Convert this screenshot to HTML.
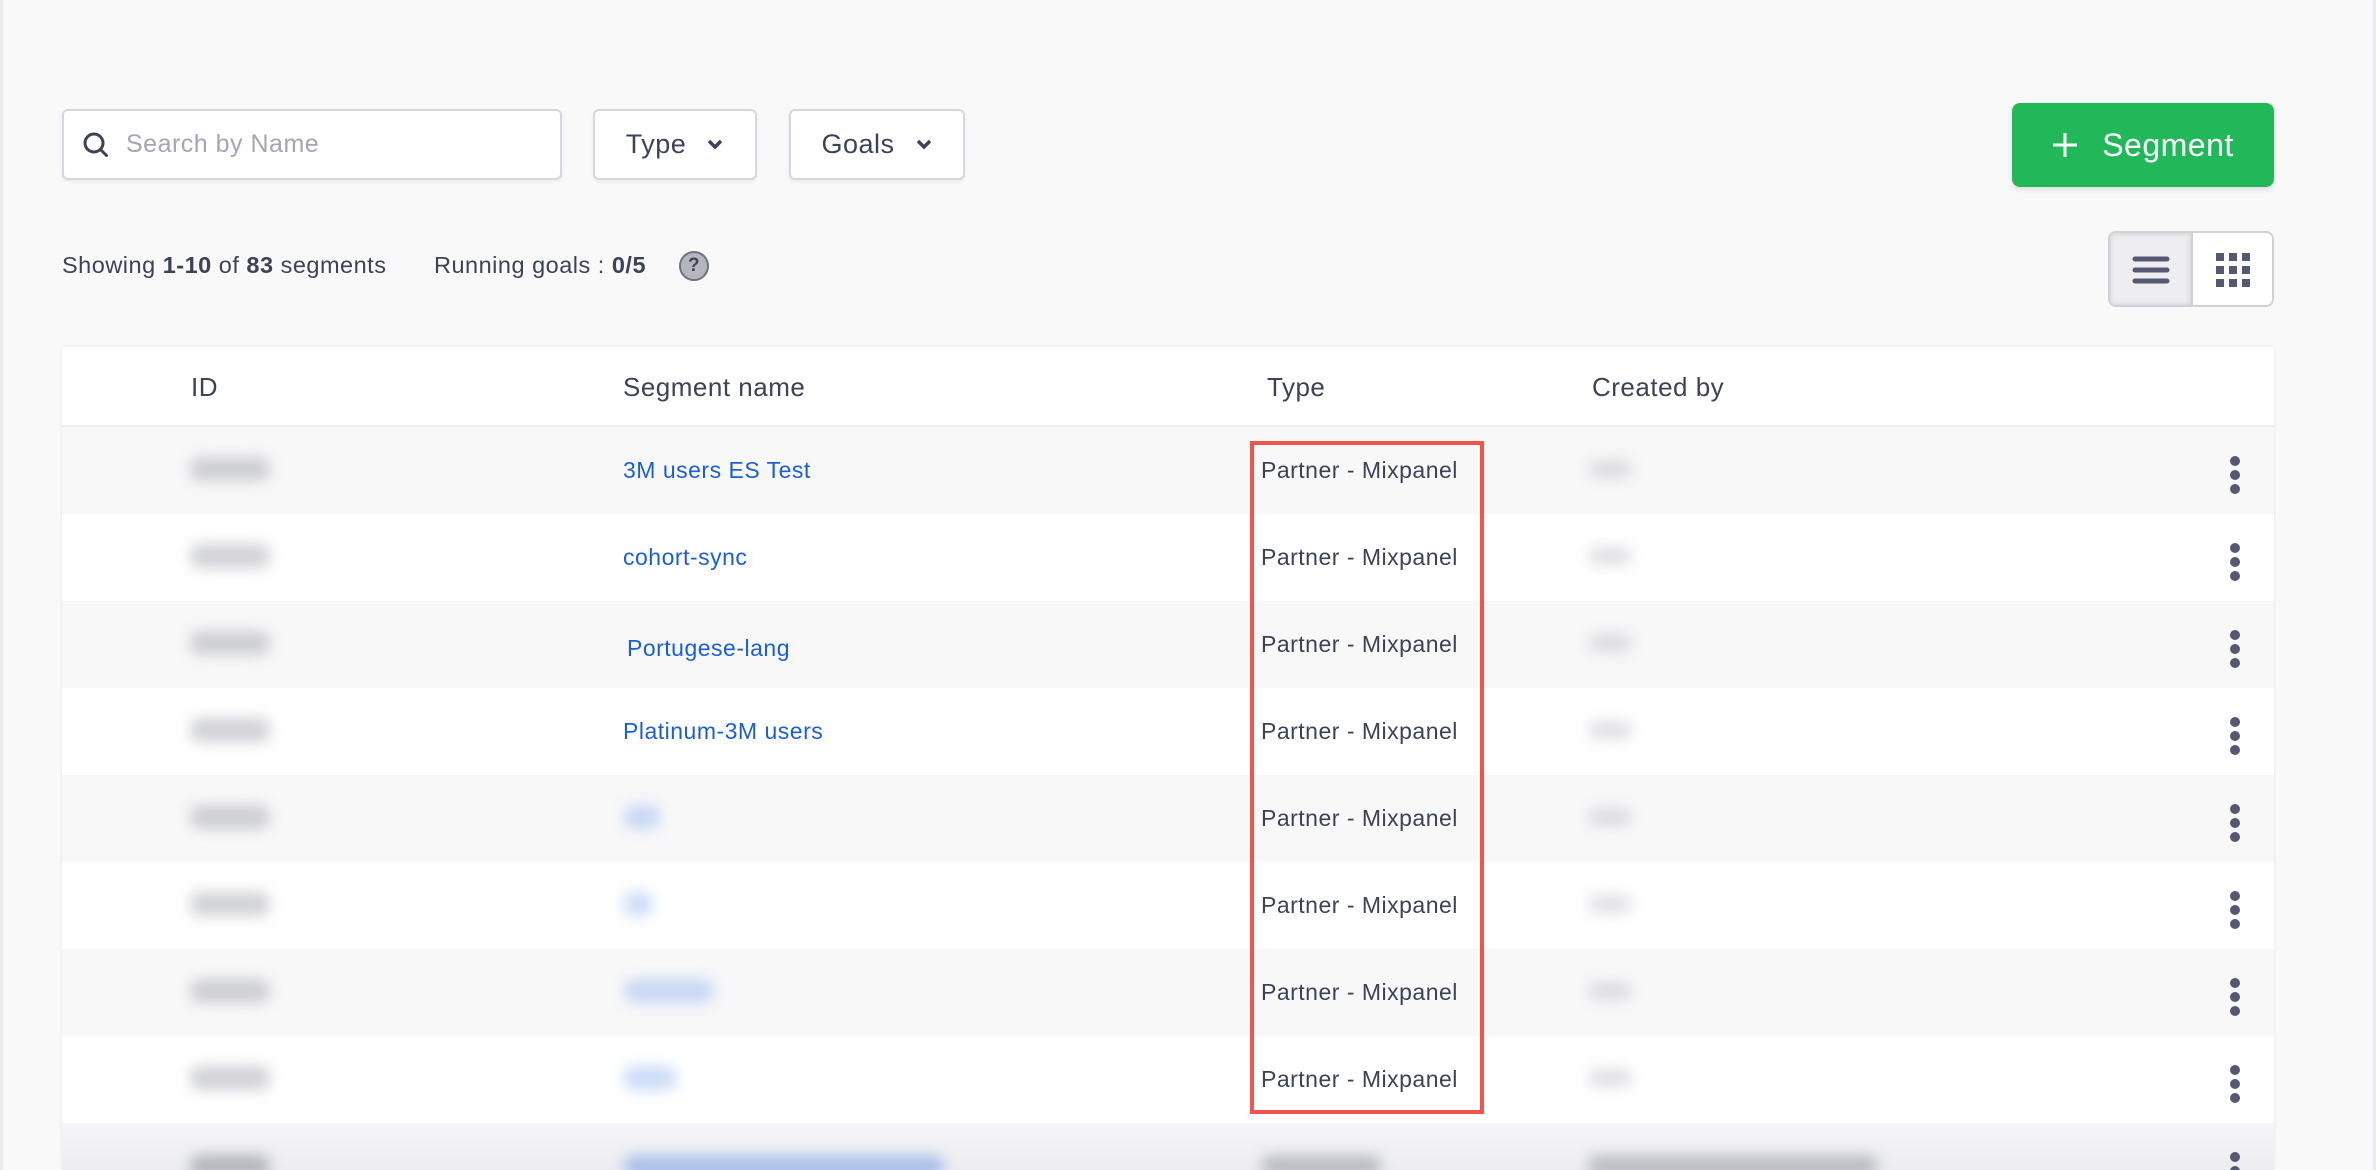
<!DOCTYPE html>
<html><head><meta charset="utf-8"><style>
*{box-sizing:border-box;margin:0;padding:0}
body{width:2376px;height:1170px;overflow:hidden;background:#f9f9fa;font-family:"Liberation Sans",sans-serif;color:#3d4258;position:relative;letter-spacing:0.5px}
.abs{position:absolute}
.box{background:#fff;border:2px solid #d6d7dc;border-radius:6px;box-shadow:0 2px 3px rgba(0,0,0,.06)}
.btn{display:flex;align-items:center;justify-content:center;font-size:27px;color:#3d4258;gap:20px}
.table{left:62px;top:347px;width:2212px;height:823px;background:#fff;box-shadow:0 0 4px rgba(0,0,0,.08);overflow:hidden}
.row{position:absolute;left:0;width:2212px;height:87px}
.row.g{background:#f8f8f9}
.cell{position:absolute;top:0;height:87px;display:flex;align-items:center;font-size:23px}
.blur{position:absolute;background:#9a9ca6;filter:blur(7px);border-radius:10px;opacity:.45}
.kb{position:absolute;left:2168px;width:12px;top:29px}
.kb i{display:block;width:10px;height:10px;border-radius:50%;background:#545971;margin-bottom:4px}
</style></head><body>
<div class="abs" style="left:0;top:0;width:3px;height:1170px;background:#ececef"></div>
<div class="abs" style="right:0;top:0;width:3px;height:1170px;background:#ececef"></div>

<div class="abs box" style="left:62px;top:109px;width:500px;height:71px;display:flex;align-items:center;padding-left:18px">
<svg width="28" height="28" viewBox="0 0 28 28"><circle cx="12" cy="12" r="9" fill="none" stroke="#3d4258" stroke-width="3"/><path d="M18.5 18.5l6 6" stroke="#3d4258" stroke-width="3" stroke-linecap="round"/></svg>
<span style="margin-left:16px;font-size:25px;color:#a3a6b3">Search by Name</span></div>
<div class="abs box btn" style="left:593px;top:109px;width:164px;height:71px">Type<svg width="18" height="12" viewBox="0 0 18 12"><path d="M3 2l6 6 6-6" fill="none" stroke="#3d4258" stroke-width="3.5"/></svg></div>
<div class="abs box btn" style="left:789px;top:109px;width:176px;height:71px">Goals<svg width="18" height="12" viewBox="0 0 18 12"><path d="M3 2l6 6 6-6" fill="none" stroke="#3d4258" stroke-width="3.5"/></svg></div>

<div class="abs" style="left:2012px;top:103px;width:262px;height:84px;background:#21b85a;border-radius:8px;box-shadow:0 3px 6px rgba(0,0,0,.1);color:#fff;font-size:32px;display:flex;align-items:center;justify-content:center;gap:24px">
<svg width="26" height="26" viewBox="0 0 26 26"><path d="M13 1v24M1 13h24" stroke="#fff" stroke-width="3"/></svg>Segment</div>

<div class="abs" style="left:62px;top:252px;font-size:23.5px">Showing <b>1-10</b> of <b>83</b> segments</div>
<div class="abs" style="left:434px;top:252px;font-size:23.5px">Running goals : <b>0/5</b></div>
<div class="abs" style="left:679px;top:251px;width:30px;height:30px;border-radius:50%;background:#b4b5bd;border:2px solid #6e7185;color:#3d4258;font-size:19px;font-weight:bold;display:flex;align-items:center;justify-content:center">?</div>

<div class="abs" style="left:2108px;top:231px;width:166px;height:76px;border:2px solid #d0d1d6;border-radius:8px;background:#fff;overflow:hidden">
<div style="position:absolute;left:0;top:0;width:83px;height:72px;background:#eeeef1;box-shadow:inset 0 0 6px rgba(0,0,0,.15);border-right:2px solid #d0d1d6"></div>
<svg class="abs" style="left:22px;top:22px" width="38" height="30" viewBox="0 0 38 30"><path d="M3 4h32M3 15h32M3 26h32" stroke="#545971" stroke-width="5" stroke-linecap="round"/></svg>
<svg class="abs" style="left:105px;top:19px" width="36" height="36" viewBox="0 0 36 36"><g fill="#545971"><rect x="1" y="1" width="8" height="8"/><rect x="14" y="1" width="8" height="8"/><rect x="27" y="1" width="8" height="8"/><rect x="1" y="14" width="8" height="8"/><rect x="14" y="14" width="8" height="8"/><rect x="27" y="14" width="8" height="8"/><rect x="1" y="27" width="8" height="8"/><rect x="14" y="27" width="8" height="8"/><rect x="27" y="27" width="8" height="8"/></g></svg>
</div>

<div class="abs table">
<div class="row" style="top:0;height:80px;border-bottom:2px solid #ededf0;background:#fff">
<div class="cell" style="left:129px;height:80px;font-size:26px">ID</div>
<div class="cell" style="left:561px;height:80px;font-size:26px">Segment name</div>
<div class="cell" style="left:1205px;height:80px;font-size:26px">Type</div>
<div class="cell" style="left:1530px;height:80px;font-size:26px">Created by</div>
</div>
<div class="row g" style="top:80px"><div class="blur" style="left:128px;top:30px;width:80px;height:24px"></div><div class="cell" style="left:561px;color:#1c5ed8">3M users ES Test</div><div class="cell" style="left:1199px">Partner - Mixpanel</div><div class="blur" style="left:1526px;top:33px;width:44px;height:18px;opacity:.3"></div><div class="kb"><i></i><i></i><i></i></div></div>
<div class="row" style="top:167px"><div class="blur" style="left:128px;top:30px;width:80px;height:24px"></div><div class="cell" style="left:561px;color:#1c5ed8">cohort-sync</div><div class="cell" style="left:1199px">Partner - Mixpanel</div><div class="blur" style="left:1526px;top:33px;width:44px;height:18px;opacity:.3"></div><div class="kb"><i></i><i></i><i></i></div></div>
<div class="row g" style="top:254px"><div class="blur" style="left:128px;top:30px;width:80px;height:24px"></div><div class="cell" style="left:565px;color:#1c5ed8;padding-top:8px">Portugese-lang</div><div class="cell" style="left:1199px">Partner - Mixpanel</div><div class="blur" style="left:1526px;top:33px;width:44px;height:18px;opacity:.3"></div><div class="kb"><i></i><i></i><i></i></div></div>
<div class="row" style="top:341px"><div class="blur" style="left:128px;top:30px;width:80px;height:24px"></div><div class="cell" style="left:561px;color:#1c5ed8">Platinum-3M users</div><div class="cell" style="left:1199px">Partner - Mixpanel</div><div class="blur" style="left:1526px;top:33px;width:44px;height:18px;opacity:.3"></div><div class="kb"><i></i><i></i><i></i></div></div>
<div class="row g" style="top:428px"><div class="blur" style="left:128px;top:30px;width:80px;height:24px"></div><div class="blur" style="left:562px;top:30px;width:36px;height:24px;background:#8fb0ef"></div><div class="cell" style="left:1199px">Partner - Mixpanel</div><div class="blur" style="left:1526px;top:33px;width:44px;height:18px;opacity:.3"></div><div class="kb"><i></i><i></i><i></i></div></div>
<div class="row" style="top:515px"><div class="blur" style="left:128px;top:30px;width:80px;height:24px"></div><div class="blur" style="left:562px;top:30px;width:28px;height:24px;background:#8fb0ef"></div><div class="cell" style="left:1199px">Partner - Mixpanel</div><div class="blur" style="left:1526px;top:33px;width:44px;height:18px;opacity:.3"></div><div class="kb"><i></i><i></i><i></i></div></div>
<div class="row g" style="top:602px"><div class="blur" style="left:128px;top:30px;width:80px;height:24px"></div><div class="blur" style="left:562px;top:30px;width:90px;height:24px;background:#8fb0ef"></div><div class="cell" style="left:1199px">Partner - Mixpanel</div><div class="blur" style="left:1526px;top:33px;width:44px;height:18px;opacity:.3"></div><div class="kb"><i></i><i></i><i></i></div></div>
<div class="row" style="top:689px"><div class="blur" style="left:128px;top:30px;width:80px;height:24px"></div><div class="blur" style="left:562px;top:30px;width:52px;height:24px;background:#8fb0ef"></div><div class="cell" style="left:1199px">Partner - Mixpanel</div><div class="blur" style="left:1526px;top:33px;width:44px;height:18px;opacity:.3"></div><div class="kb"><i></i><i></i><i></i></div></div>
<div class="row" style="top:776px;background:linear-gradient(#f6f6f8,#e4e5e9)"><div class="blur" style="left:128px;top:32px;width:80px;height:22px;opacity:.7"></div><div class="blur" style="left:562px;top:32px;width:320px;height:22px;background:#7f9fe6;opacity:.6"></div><div class="blur" style="left:1199px;top:32px;width:120px;height:22px;opacity:.6"></div><div class="blur" style="left:1526px;top:32px;width:290px;height:22px;opacity:.6"></div><div class="kb"><i></i><i></i><i></i></div></div>
</div>

<div class="abs" style="left:1250px;top:441px;width:234px;height:673px;border:4px solid #f0554b"></div>
</body></html>
